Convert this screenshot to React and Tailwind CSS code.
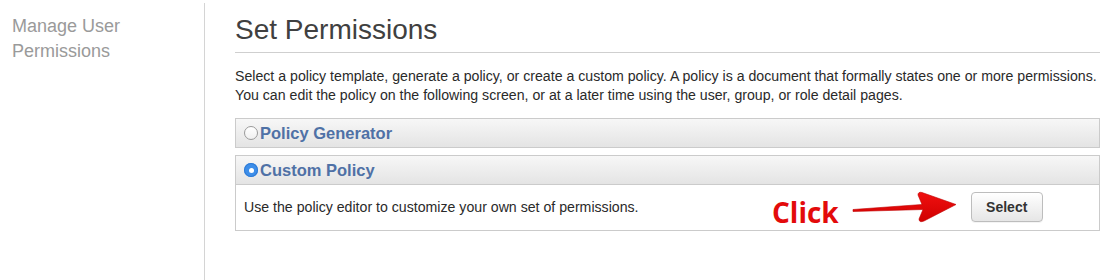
import React from "react";

const font = { fontFamily: '"Liberation Sans", Arial, sans-serif' };

function Radio({ checked }) {
  if (checked) {
    return (
      <span className="flex h-[14px] w-[14px] items-center justify-center rounded-full bg-[#3d8ee9] shadow-[inset_0_0_0_1px_#2f7bd6]">
        <span className="h-[5px] w-[5px] rounded-full bg-white" />
      </span>
    );
  }
  return (
    <span className="block h-[14px] w-[14px] rounded-full border border-[#9a9a9a] bg-gradient-to-b from-white to-[#f0f0f0]" />
  );
}

function Arrow() {
  return (
    <svg width="106" height="34" viewBox="0 0 106 34" className="block">
      <defs>
        <linearGradient id="ag" x1="0" y1="0" x2="0" y2="1">
          <stop offset="0" stopColor="#f01010" />
          <stop offset="1" stopColor="#d00000" />
        </linearGradient>
      </defs>
      <path
        d="M1 19.5 L70 14.5 L66 5 Q66 1.5 70 2.5 L104 14.5 L72 31 Q67 33 67 29 L71 19.5 L1 21.5 Z"
        fill="url(#ag)"
        stroke="#c00000"
        strokeWidth="0.6"
        strokeLinejoin="round"
      />
    </svg>
  );
}

export default function App() {
  return (
    <div className="flex h-[280px] w-[1108px] bg-white" style={font}>
      <div className="w-[204px] shrink-0 pl-[12px] pt-[14px]">
        <div className="text-[18px] leading-[25px] text-[#9a9a9a]">
          Manage User
          <br />
          Permissions
        </div>
      </div>
      <div className="mt-[3px] w-px bg-[#d4d4d4]" />
      <div className="flex-1 pl-[30px] pr-[8px]">
        <h1 className="pt-[13px] text-[28px] leading-[33px] text-[#404040]">Set Permissions</h1>
        <div className="mt-[6px] h-px bg-[#cfcfcf]" />
        <p className="mt-[14px] text-[14.15px] leading-[19px] text-[#2a2a2a]">
          Select a policy template, generate a policy, or create a custom policy. A policy is a document that formally states one or more permissions.
          <br />
          You can edit the policy on the following screen, or at a later time using the user, group, or role detail pages.
        </p>

        <div className="mt-[13px] flex h-[30px] items-center gap-[2px] border border-[#cbcbcb] bg-gradient-to-b from-[#f7f7f7] to-[#e4e4e4] pl-[8px]">
          <Radio />
          <span className="text-[16.5px] font-bold text-[#4f71a6]">Policy Generator</span>
        </div>

        <div className="mt-[7px] border border-[#cbcbcb]">
          <div className="flex h-[29px] items-center gap-[2px] border-b border-[#cbcbcb] bg-gradient-to-b from-[#f7f7f7] to-[#e4e4e4] pl-[8px]">
            <Radio checked />
            <span className="text-[16.5px] font-bold text-[#4f71a6]">Custom Policy</span>
          </div>
          <div className="flex h-[45px] items-center pl-[8px]">
            <span className="w-[490px] shrink-0 text-[14.15px] text-[#2a2a2a]">Use the policy editor to customize your own set of permissions.</span>
            <div className="ml-[38px] mt-[8px] flex items-center">
              <span
                className="text-[28px] font-bold leading-none text-[#e30b0b]"
                style={{ fontFamily: '"Open Sans", "Noto Sans", sans-serif' }}
              >
                Click
              </span>
              <div className="ml-[13px] -mt-[10px]">
                <Arrow />
              </div>
            </div>
            <button className="ml-[13px] -mt-[1px] h-[30px] w-[72px] rounded-[4px] border border-[#bdbdbd] bg-gradient-to-b from-white to-[#e6e6e6] text-[14px] font-bold text-[#333] shadow-[0_1px_0_#f4f4f4]">
              Select
            </button>
          </div>
        </div>
      </div>
    </div>
  );
}
